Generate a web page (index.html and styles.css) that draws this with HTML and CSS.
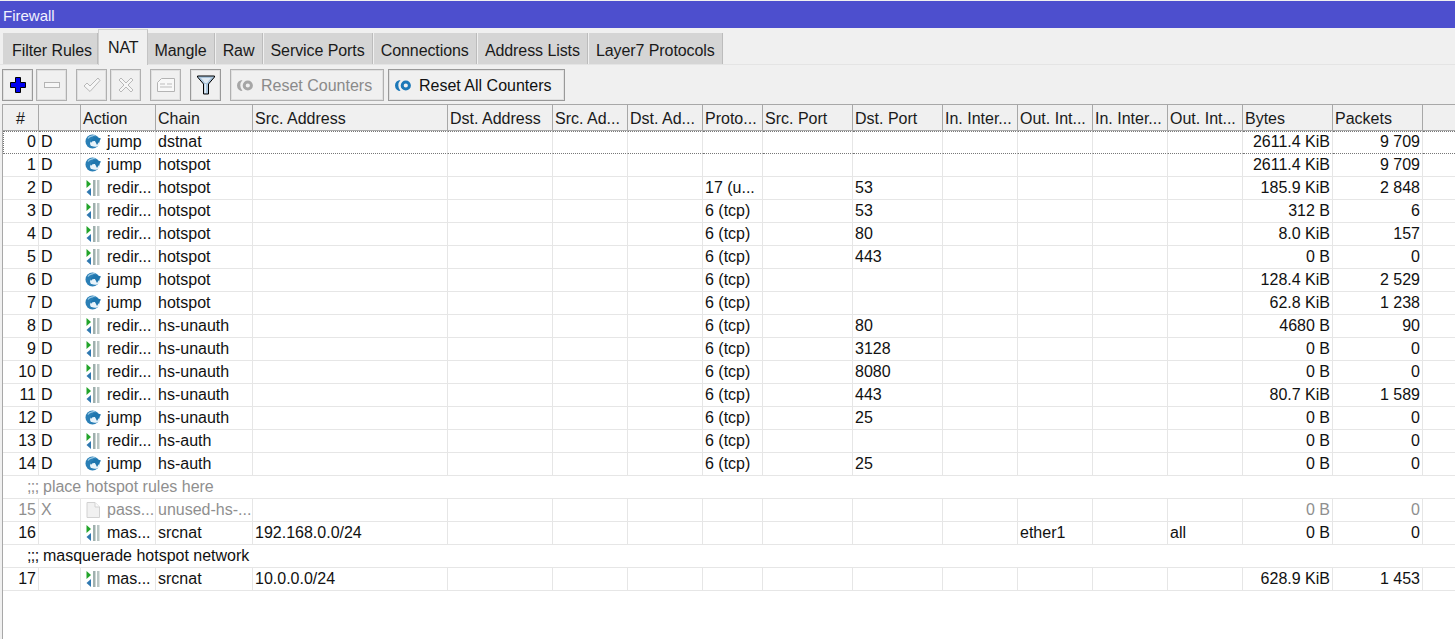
FILE: index.html
```html
<!DOCTYPE html>
<html lang="en">
<head>
<meta charset="utf-8">
<title>Firewall</title>
<link rel="stylesheet" href="styles.css">
</head>
<body>
<svg class="defs" width="0" height="0" aria-hidden="true">
  <symbol id="i-jump" viewBox="0 0 16 16">
    <g transform="translate(0 -1)">
      <circle cx="7.500" cy="8.500" r="7" fill="#2a7fb6"/>
      <path d="M3 5.500C4.500 3 8 2.200 10.500 3" fill="none" stroke="#9ccbe6" stroke-width="1.300"/>
      <path d="M5 11C5 8.500 7 7.500 9 7.800L14 9.500 14.500 12 12 13.500C9 14 5.500 13.500 5 11Z" fill="#e8f3fa"/>
      <path d="M8.500 3 16 5.500 12 12 10 8C8 7.600 6.500 8.500 6 10 5.500 7.500 6.500 6 8.500 5.500Z" fill="#1f76ae"/>
    </g>
  </symbol>
  <symbol id="i-redir" viewBox="0 0 16 16">
    <path d="M1.500 0 6 4 1.500 8Z" fill="#22a42a"/>
    <path d="M6 8 1.500 12 6 16Z" fill="#2f78b0"/>
    <rect x="8" y="0" width="2.500" height="16" fill="#9fb0ae"/>
    <rect x="12" y="0" width="2.500" height="16" fill="#b9c6c4"/>
  </symbol>
  <symbol id="i-doc" viewBox="0 0 16 16">
    <path d="M2 .5H10L14.500 5V15.500H2Z" fill="#f1f1f1" stroke="#d2d2d2"/>
    <path d="M10 .5V5H14.500" fill="#fafafa" stroke="#d2d2d2"/>
  </symbol>
  <symbol id="i-reset" viewBox="0 0 16 11">
    <path d="M5.500 0A5.500 5.500 0 0 0 5.500 11 8 8 0 0 1 5.500 0Z" fill="currentColor"/>
    <circle cx="10.800" cy="5.500" r="3.600" fill="none" stroke="currentColor" stroke-width="3"/>
  </symbol>
</svg>

<header class="titlebar">Firewall</header>

<nav class="tabs">
  <span class="tab">Filter Rules</span>
  <span class="tab tab-active">NAT</span>
  <span class="tab">Mangle</span>
  <span class="tab">Raw</span>
  <span class="tab">Service Ports</span>
  <span class="tab">Connections</span>
  <span class="tab">Address Lists</span>
  <span class="tab">Layer7 Protocols</span>
</nav>

<div class="toolbar">
  <button class="tool" aria-label="Add">
    <svg width="16" height="16" viewBox="0 0 16 16"><path d="M5.500.5h5v5h5v5h-5v5h-5v-5h-5v-5h5Z" fill="#0000f0" stroke="#000" stroke-width="1"/></svg>
  </button>
  <button class="tool tool-off tool-gap-xs" aria-label="Remove">
    <svg width="16" height="6" viewBox="0 0 16 6"><rect x=".5" y=".5" width="15" height="5" fill="#f6f6f6" stroke="#b4b4b4"/></svg>
  </button>
  <button class="tool tool-off tool-gap-m" aria-label="Enable">
    <svg width="18" height="16" viewBox="0 0 18 16"><path d="M1 9 4 6 7 9 15 1 17 3.500 7 14.500Z" fill="#f6f6f6" stroke="#b8b8b8"/></svg>
  </button>
  <button class="tool tool-off tool-gap-xs" aria-label="Disable">
    <svg width="16" height="16" viewBox="0 0 16 16"><path d="M1 3 3 1 8 6 13 1 15 3 10 8 15 13 13 15 8 10 3 15 1 13 6 8Z" fill="#f6f6f6" stroke="#b8b8b8"/></svg>
  </button>
  <button class="tool tool-off tool-gap-m" aria-label="Comment">
    <svg width="18" height="14" viewBox="0 0 18 14"><path d="M.5 4.500 4.500.5H17.500V13.500H.5Z" fill="#f8f8f8" stroke="#b4b4b4"/><path d="M3 6h5M10 6h5M3 9h12" stroke="#bdbdbd"/></svg>
  </button>
  <button class="tool tool-gap-m" aria-label="Filter">
    <svg width="18" height="20" viewBox="0 0 18 20"><path d="M.5 1H17.500V2L11.500 9V19H6.500V9L.5 2Z" fill="#a9c4dc" stroke="#000"/><path d="M4 3H14L10 8H8Z" fill="#dfe9f2"/><path d="M7.500 9H9V18H7.500Z" fill="#e4edf5"/></svg>
  </button>
  <button class="tool tool-text tool-off tool-w-a tool-gap-m"><svg class="reset reset-off" width="16" height="11"><use href="#i-reset"/></svg>Reset Counters</button>
  <button class="tool tool-text tool-w-b tool-gap-s"><svg class="reset reset-on" width="16" height="11"><use href="#i-reset"/></svg>Reset All Counters</button>
</div>

<main class="panel">
<table class="grid">
  <colgroup>
    <col class="c36"><col class="c42"><col class="c75"><col class="c97"><col class="c195"><col class="c105"><col class="c75"><col class="c75"><col class="c60"><col class="c90"><col class="c90"><col class="c75"><col class="c75"><col class="c75"><col class="c75"><col class="c90"><col class="c90"><col>
  </colgroup>
  <thead>
    <tr>
      <th class="num-head">#</th><th></th><th>Action</th><th>Chain</th><th>Src. Address</th><th>Dst. Address</th><th>Src. Ad...</th><th>Dst. Ad...</th><th>Proto...</th><th>Src. Port</th><th>Dst. Port</th><th>In. Inter...</th><th>Out. Int...</th><th>In. Inter...</th><th>Out. Int...</th><th>Bytes</th><th>Packets</th><th></th>
    </tr>
  </thead>
  <tbody>
    <tr class="focus"><td class="r">0</td><td>D</td><td class="act"><svg class="ico"><use href="#i-jump"/></svg>jump</td><td>dstnat</td><td></td><td></td><td></td><td></td><td></td><td></td><td></td><td></td><td></td><td></td><td></td><td class="r">2611.4 KiB</td><td class="r">9 709</td><td></td></tr>
    <tr><td class="r">1</td><td>D</td><td class="act"><svg class="ico"><use href="#i-jump"/></svg>jump</td><td>hotspot</td><td></td><td></td><td></td><td></td><td></td><td></td><td></td><td></td><td></td><td></td><td></td><td class="r">2611.4 KiB</td><td class="r">9 709</td><td></td></tr>
    <tr><td class="r">2</td><td>D</td><td class="act"><svg class="ico"><use href="#i-redir"/></svg>redir...</td><td>hotspot</td><td></td><td></td><td></td><td></td><td>17 (u...</td><td></td><td>53</td><td></td><td></td><td></td><td></td><td class="r">185.9 KiB</td><td class="r">2 848</td><td></td></tr>
    <tr><td class="r">3</td><td>D</td><td class="act"><svg class="ico"><use href="#i-redir"/></svg>redir...</td><td>hotspot</td><td></td><td></td><td></td><td></td><td>6 (tcp)</td><td></td><td>53</td><td></td><td></td><td></td><td></td><td class="r">312 B</td><td class="r">6</td><td></td></tr>
    <tr><td class="r">4</td><td>D</td><td class="act"><svg class="ico"><use href="#i-redir"/></svg>redir...</td><td>hotspot</td><td></td><td></td><td></td><td></td><td>6 (tcp)</td><td></td><td>80</td><td></td><td></td><td></td><td></td><td class="r">8.0 KiB</td><td class="r">157</td><td></td></tr>
    <tr><td class="r">5</td><td>D</td><td class="act"><svg class="ico"><use href="#i-redir"/></svg>redir...</td><td>hotspot</td><td></td><td></td><td></td><td></td><td>6 (tcp)</td><td></td><td>443</td><td></td><td></td><td></td><td></td><td class="r">0 B</td><td class="r">0</td><td></td></tr>
    <tr><td class="r">6</td><td>D</td><td class="act"><svg class="ico"><use href="#i-jump"/></svg>jump</td><td>hotspot</td><td></td><td></td><td></td><td></td><td>6 (tcp)</td><td></td><td></td><td></td><td></td><td></td><td></td><td class="r">128.4 KiB</td><td class="r">2 529</td><td></td></tr>
    <tr><td class="r">7</td><td>D</td><td class="act"><svg class="ico"><use href="#i-jump"/></svg>jump</td><td>hotspot</td><td></td><td></td><td></td><td></td><td>6 (tcp)</td><td></td><td></td><td></td><td></td><td></td><td></td><td class="r">62.8 KiB</td><td class="r">1 238</td><td></td></tr>
    <tr><td class="r">8</td><td>D</td><td class="act"><svg class="ico"><use href="#i-redir"/></svg>redir...</td><td>hs-unauth</td><td></td><td></td><td></td><td></td><td>6 (tcp)</td><td></td><td>80</td><td></td><td></td><td></td><td></td><td class="r">4680 B</td><td class="r">90</td><td></td></tr>
    <tr><td class="r">9</td><td>D</td><td class="act"><svg class="ico"><use href="#i-redir"/></svg>redir...</td><td>hs-unauth</td><td></td><td></td><td></td><td></td><td>6 (tcp)</td><td></td><td>3128</td><td></td><td></td><td></td><td></td><td class="r">0 B</td><td class="r">0</td><td></td></tr>
    <tr><td class="r">10</td><td>D</td><td class="act"><svg class="ico"><use href="#i-redir"/></svg>redir...</td><td>hs-unauth</td><td></td><td></td><td></td><td></td><td>6 (tcp)</td><td></td><td>8080</td><td></td><td></td><td></td><td></td><td class="r">0 B</td><td class="r">0</td><td></td></tr>
    <tr><td class="r">11</td><td>D</td><td class="act"><svg class="ico"><use href="#i-redir"/></svg>redir...</td><td>hs-unauth</td><td></td><td></td><td></td><td></td><td>6 (tcp)</td><td></td><td>443</td><td></td><td></td><td></td><td></td><td class="r">80.7 KiB</td><td class="r">1 589</td><td></td></tr>
    <tr><td class="r">12</td><td>D</td><td class="act"><svg class="ico"><use href="#i-jump"/></svg>jump</td><td>hs-unauth</td><td></td><td></td><td></td><td></td><td>6 (tcp)</td><td></td><td>25</td><td></td><td></td><td></td><td></td><td class="r">0 B</td><td class="r">0</td><td></td></tr>
    <tr><td class="r">13</td><td>D</td><td class="act"><svg class="ico"><use href="#i-redir"/></svg>redir...</td><td>hs-auth</td><td></td><td></td><td></td><td></td><td>6 (tcp)</td><td></td><td></td><td></td><td></td><td></td><td></td><td class="r">0 B</td><td class="r">0</td><td></td></tr>
    <tr><td class="r">14</td><td>D</td><td class="act"><svg class="ico"><use href="#i-jump"/></svg>jump</td><td>hs-auth</td><td></td><td></td><td></td><td></td><td>6 (tcp)</td><td></td><td>25</td><td></td><td></td><td></td><td></td><td class="r">0 B</td><td class="r">0</td><td></td></tr>
    <tr class="off"><td class="comment" colspan="18"><span class="semi">;;;</span> place hotspot rules here</td></tr>
    <tr class="off"><td class="r">15</td><td>X</td><td class="act"><svg class="ico"><use href="#i-doc"/></svg>pass...</td><td>unused-hs-...</td><td></td><td></td><td></td><td></td><td></td><td></td><td></td><td></td><td></td><td></td><td></td><td class="r">0 B</td><td class="r">0</td><td></td></tr>
    <tr><td class="r">16</td><td></td><td class="act"><svg class="ico"><use href="#i-redir"/></svg>mas...</td><td>srcnat</td><td>192.168.0.0/24</td><td></td><td></td><td></td><td></td><td></td><td></td><td></td><td>ether1</td><td></td><td>all</td><td class="r">0 B</td><td class="r">0</td><td></td></tr>
    <tr><td class="comment" colspan="18"><span class="semi">;;;</span> masquerade hotspot network</td></tr>
    <tr><td class="r">17</td><td></td><td class="act"><svg class="ico"><use href="#i-redir"/></svg>mas...</td><td>srcnat</td><td>10.0.0.0/24</td><td></td><td></td><td></td><td></td><td></td><td></td><td></td><td></td><td></td><td></td><td class="r">628.9 KiB</td><td class="r">1 453</td><td></td></tr>
  </tbody>
</table>
</main>
</body>
</html>
```
FILE: styles.css
```css
* { box-sizing: border-box; }
html, body { margin: 0; height: 100%; overflow: hidden; }
body {
  background: #f0f0f0;
  color: #111;
  font: 16px/1 "Liberation Sans", Arial, sans-serif;
  display: flex;
  flex-direction: column;
  padding-top: 1px;
}
.defs { position: absolute; }

.titlebar {
  height: 27px;
  flex: none;
  background: #4d4fce;
  color: #f2f2ff;
  font-size: 15px;
  line-height: 29px;
  padding-left: 3px;
}

.tabs {
  flex: none;
  height: 37px;
  display: flex;
  align-items: flex-end;
  padding-left: 3px;
  border-bottom: 1px solid #e4e4e4;
}
.tab {
  height: 31px;
  line-height: 35px;
  padding: 0 7.100px 0 7px;
  margin-right: 1px;
  background: #d5d5d5;
  border-right: 1px solid #bcbcbc;
  white-space: nowrap;
  color: #1a1a1a;
  letter-spacing: -.08px;
}
.tab:first-child { padding: 0 5px 0 9px; margin-right: 0; }
.tab-active {
  height: 36px;
  line-height: 35px;
  background: #f0f0f0;
  padding: 0 8px 0 9px;
  margin: 0;
  border-top: 1px solid #d0d0d0;
  border-left: 1px solid #d0d0d0;
  border-right: 1px solid #c4c4c4;
  position: relative;
  top: 1px;
}

.toolbar {
  flex: none;
  display: flex;
  height: 39px;
  align-items: flex-start;
  padding: 4px 0 0 2px;
}
.tool {
  width: 31px;
  height: 32px;
  padding: 0;
  display: flex;
  align-items: center;
  justify-content: center;
  background: #f0f0f0;
  border: 1px solid #999;
  box-shadow: inset 0 0 0 1px #e0e0e0;
  border-radius: 0;
  font: inherit;
  color: #111;
}
.tool-off { border-color: #b0b0b0; color: #8a8a8a; }
.tool-gap-xs { margin-left: 3px; }
.tool-gap-s { margin-left: 4px; }
.tool-gap-m { margin-left: 9px; }
.tool-text { justify-content: flex-start; padding: 1px 0 0 6px; }
.tool-w-a { width: 154px; }
.tool-w-b { width: 177px; }
.reset { margin-right: 8px; flex: none; }
.reset-off { color: #a6a6a6; }
.reset-on { color: #1c78b8; }

.panel {
  flex: 1;
  margin-left: 2px;
  background: #fff;
  border-left: 1px solid #a8a8a8;
  min-height: 0;
}
.grid {
  width: 100%;
  border-collapse: separate;
  border-spacing: 0;
  table-layout: fixed;
}
.c36 { width: 36px; }
.c42 { width: 42px; }
.c60 { width: 60px; }
.c75 { width: 75px; }
.c90 { width: 90px; }
.c97 { width: 97px; }
.c105 { width: 105px; }
.c195 { width: 195px; }

th {
  height: 27px;
  padding: 3px 0 0 2px;
  font-weight: 400;
  text-align: left;
  background: #f0f0f0;
  border-top: 1px solid #a8a8a8;
  border-bottom: 1px solid #a8a8a8;
  border-right: 1px solid #a8a8a8;
  white-space: nowrap;
  overflow: hidden;
  color: #1a1a1a;
}
th:last-child { border-right: 0; }
th.num-head { text-align: center; padding-left: 0; }

td {
  height: 23px;
  padding: 0 2px 1px 2px;
  border-bottom: 1px solid #e6e6e6;
  border-right: 1px solid #e6e6e6;
  white-space: nowrap;
  overflow: hidden;
  color: #111;
}
td:last-child { border-right: 0; }
td.r { text-align: right; padding: 0 2px 1px 0; }
td.act { padding-left: 4px; }
.ico {
  width: 16px;
  height: 16px;
  margin-right: 6px;
  vertical-align: -3px;
}
td.comment { padding-left: 24px; border-right: 0; }
.semi { letter-spacing: -.6px; }

.off td { color: #8f8f8f; }
.focus td {
  border-top: 1px dotted #777;
  border-bottom: 1px dotted #777;
  height: 23px;
}
.focus td:first-child { border-left: 1px dotted #777; }
```
